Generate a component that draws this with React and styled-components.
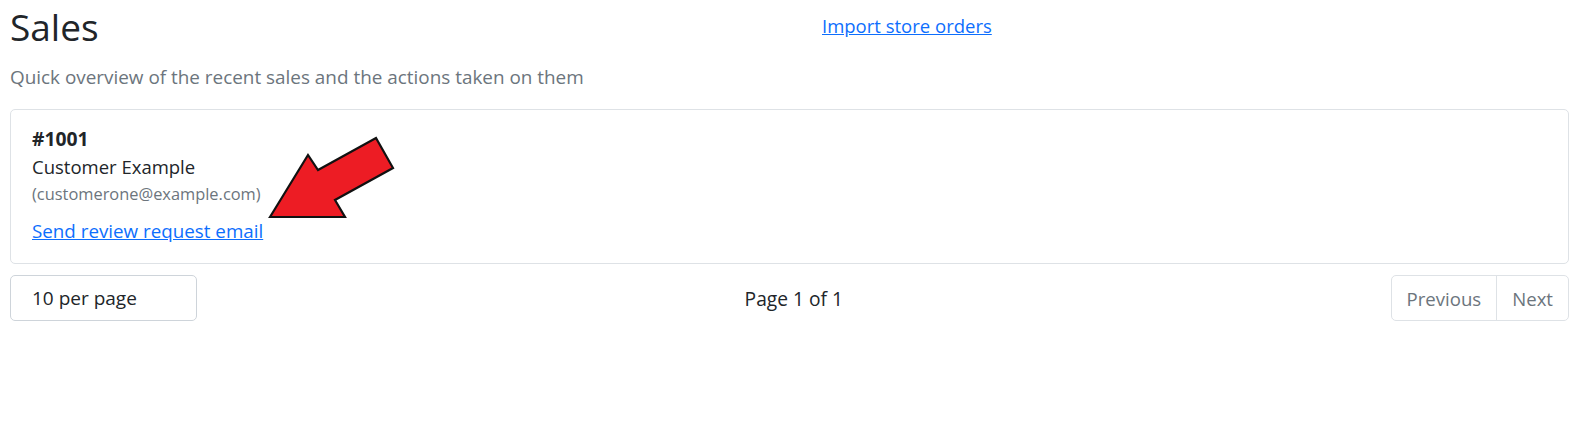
import React from 'react'
import styled, { createGlobalStyle } from 'styled-components'

const GlobalStyle = createGlobalStyle`
  * { box-sizing: border-box; }
  body {
    margin: 0;
    background: #fff;
    color: #212529;
    font-family: "Open Sans", "Noto Sans", sans-serif;
  }
`

const App = () => {
  return (
    <>
      <GlobalStyle />
      <Page>
        <Header>
          <Title>Sales</Title>
          <HeaderLink href="#">Import store orders</HeaderLink>
        </Header>
        <Lead>Quick overview of the recent sales and the actions taken on them</Lead>

        <Card>
          <OrderNo>#1001</OrderNo>
          <Customer>Customer Example</Customer>
          <Email>(customerone@example.com)</Email>
          <ActionLink href="#">Send review request email</ActionLink>
          <Arrow viewBox="0 0 130 84" width="130" height="84">
            <polygon
              points="3,80 41,18 51,33 109,1 126,31 68,63 78,80"
              fill="#ed1c24"
              stroke="#111"
              strokeWidth="2.2"
              strokeLinejoin="miter"
            />
          </Arrow>
        </Card>

        <Footer>
          <PerPage>10 per page</PerPage>
          <PageInfo>Page 1 of 1</PageInfo>
          <Pager>
            <PagerButton>Previous</PagerButton>
            <PagerButton>Next</PagerButton>
          </Pager>
        </Footer>
      </Page>
    </>
  )
}

const Page = styled.div`
  padding: 0 9px 0 10px;
`

const Header = styled.div`
  display: grid;
  grid-template-columns: 812px 1fr;
  align-items: start;
  height: 56px;
`

const Title = styled.h1`
  margin: 0;
  padding-top: 3px;
  font-size: 37px;
  font-weight: 400;
  line-height: 48px;
  color: #212529;
`

const HeaderLink = styled.a`
  justify-self: start;
  margin-top: 12px;
  font-size: 18.5px;
  line-height: 28px;
  color: #0d6efd;
  text-decoration: underline;
`

const Lead = styled.p`
  margin: 7px 0 0;
  font-size: 18.9px;
  line-height: 28px;
  color: #6c757d;
`

const Card = styled.div`
  position: relative;
  margin-top: 18px;
  border: 1px solid #dee2e6;
  border-radius: 5px;
  padding: 14px 21px 19px;
  display: flex;
  flex-direction: column;
  align-items: flex-start;
`

const OrderNo = styled.div`
  font-size: 19.3px;
  font-weight: 700;
  line-height: 29px;
`

const Customer = styled.div`
  font-size: 18.5px;
  line-height: 28px;
`

const Email = styled.div`
  font-size: 16.4px;
  line-height: 26px;
  color: #6c757d;
`

const ActionLink = styled.a`
  margin-top: 11px;
  font-size: 18.8px;
  line-height: 26px;
  color: #0d6efd;
  text-decoration: underline;
`

const Arrow = styled.svg`
  position: absolute;
  left: 256px;
  top: 27px;
  overflow: visible;
`

const Footer = styled.div`
  margin-top: 11px;
  display: flex;
  justify-content: space-between;
  align-items: center;
`

const PerPage = styled.div`
  width: 187px;
  height: 46px;
  border: 1px solid #ced4da;
  border-radius: 5px;
  padding: 0 21px;
  display: flex;
  align-items: center;
  font-size: 19px;
`

const PageInfo = styled.div`
  font-size: 19.2px;
`

const Pager = styled.div`
  display: flex;
  height: 46px;
  border: 1px solid #dee2e6;
  border-radius: 5px;
  overflow: hidden;
`

const PagerButton = styled.div`
  display: flex;
  align-items: center;
  padding: 0 15px;
  font-size: 18.6px;
  color: #6c757d;

  & + & {
    border-left: 1px solid #dee2e6;
  }
`

export default App
